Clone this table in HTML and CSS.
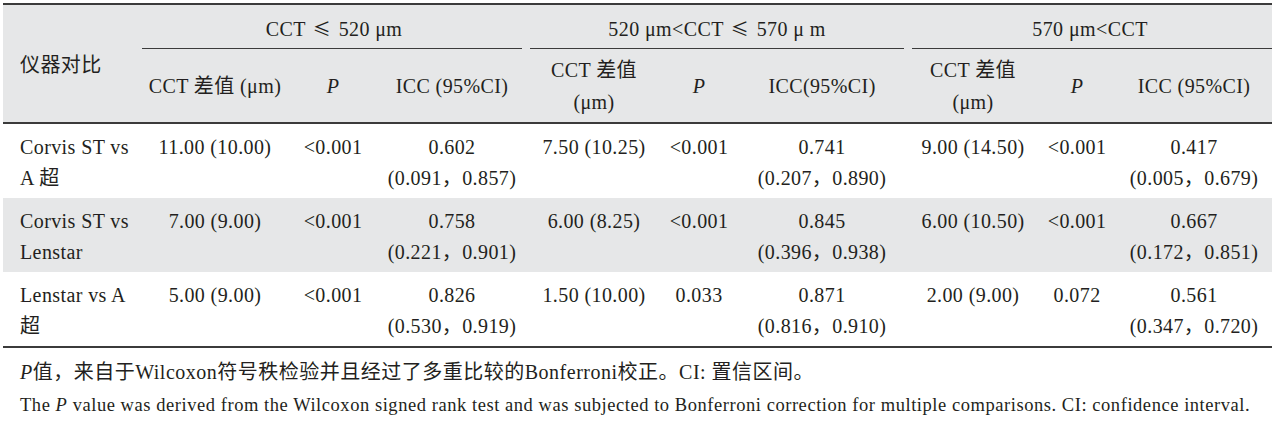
FILE: index.html
```html
<!DOCTYPE html>
<html lang="zh">
<head>
<meta charset="utf-8">
<title>仪器对比</title>
<link rel="stylesheet" href="styles.css">
</head>
<body>
<div class="page">
  <table class="data">
    <colgroup>
      <col class="c-name">
      <col class="c-g1a"><col class="c-g1b"><col class="c-g1c">
      <col class="c-g2a"><col class="c-g2b"><col class="c-g2c">
      <col class="c-g3a"><col class="c-g3b"><col class="c-g3c">
    </colgroup>
    <thead>
      <tr class="h1">
        <th rowspan="2" class="name">仪器对比</th>
        <th colspan="3" class="grp grp-first">CCT <span class="le">≤</span> 520 μm</th>
        <th colspan="3" class="grp grp-mid">520 μm&lt;CCT <span class="le">≤</span> 570 μ m</th>
        <th colspan="3" class="grp grp-last">570 μm&lt;CCT</th>
      </tr>
      <tr class="h2">
        <th>CCT 差值 (μm)</th>
        <th><i>P</i></th>
        <th>ICC (95%CI)</th>
        <th>CCT 差值<br>(μm)</th>
        <th><i>P</i></th>
        <th>ICC(95%CI)</th>
        <th>CCT 差值<br>(μm)</th>
        <th><i>P</i></th>
        <th>ICC (95%CI)</th>
      </tr>
    </thead>
    <tbody>
      <tr>
        <td class="name">Corvis ST vs<br>A 超</td>
        <td>11.00 (10.00)</td>
        <td>&lt;0.001</td>
        <td>0.602<br>(0.091，0.857)</td>
        <td>7.50 (10.25)</td>
        <td>&lt;0.001</td>
        <td>0.741<br>(0.207，0.890)</td>
        <td>9.00 (14.50)</td>
        <td>&lt;0.001</td>
        <td>0.417<br>(0.005，0.679)</td>
      </tr>
      <tr class="shade">
        <td class="name">Corvis ST vs<br>Lenstar</td>
        <td>7.00 (9.00)</td>
        <td>&lt;0.001</td>
        <td>0.758<br>(0.221，0.901)</td>
        <td>6.00 (8.25)</td>
        <td>&lt;0.001</td>
        <td>0.845<br>(0.396，0.938)</td>
        <td>6.00 (10.50)</td>
        <td>&lt;0.001</td>
        <td>0.667<br>(0.172，0.851)</td>
      </tr>
      <tr>
        <td class="name">Lenstar vs A<br>超</td>
        <td>5.00 (9.00)</td>
        <td>&lt;0.001</td>
        <td>0.826<br>(0.530，0.919)</td>
        <td>1.50 (10.00)</td>
        <td>0.033</td>
        <td>0.871<br>(0.816，0.910)</td>
        <td>2.00 (9.00)</td>
        <td>0.072</td>
        <td>0.561<br>(0.347，0.720)</td>
      </tr>
    </tbody>
  </table>
  <div class="notes">
    <p class="note-zh"><i>P</i>值，来自于Wilcoxon符号秩检验并且经过了多重比较的Bonferroni校正。CI: 置信区间。</p>
    <p class="note-en">The <i>P</i> value was derived from the Wilcoxon signed rank test and was subjected to Bonferroni correction for multiple comparisons. CI: confidence interval.</p>
  </div>
</div>
</body>
</html>
```
FILE: styles.css
```css
html, body {
  margin: 0;
  padding: 0;
  background: #ffffff;
}

body {
  font-family: "Liberation Serif", "Noto Sans CJK SC", serif;
  color: #231f20;
}

.page {
  padding: 3px 5px 0 3px;
}

.data {
  width: 1269px;
  border-collapse: collapse;
  table-layout: fixed;
  font-size: 20px;
  letter-spacing: 0.4px;
}

.c-name { width: 139px; }
.c-g1a { width: 146px; }
.c-g1b { width: 90px; }
.c-g1c { width: 148px; }
.c-g2a { width: 136px; }
.c-g2b { width: 74px; }
.c-g2c { width: 172px; }
.c-g3a { width: 130px; }
.c-g3b { width: 78px; }
.c-g3c { width: 156px; }

.data thead {
  background: #e6e7e8;
  border-top: 2px solid #3b3b3b;
  border-bottom: 2px solid #3b3b3b;
}

.data th {
  font-weight: normal;
  text-align: center;
  padding: 0 4px;
}

.le {
  font-family: "Noto Sans CJK SC", "DejaVu Sans", sans-serif;
  font-size: 18px;
  margin: 0 2px;
}

.data th.name {
  text-align: left;
  padding-left: 17px;
  vertical-align: middle;
  padding-bottom: 6px;
}

.h1 th {
  height: 43px;
  line-height: 30px;
  padding-top: 8px;
  padding-bottom: 5px;
  box-sizing: border-box;
  vertical-align: middle;
  background-repeat: no-repeat;
  background-image: linear-gradient(#3b3b3b, #3b3b3b);
  background-position: left bottom;
}

.h1 th.name {
  background-image: none;
}

.h1 th.grp-first {
  background-size: calc(100% - 4px) 1.5px;
  background-position: left bottom;
}

.h1 th.grp-mid {
  background-size: calc(100% - 8px) 1.5px;
  background-position: center bottom;
}

.h1 th.grp-last {
  background-size: calc(100% - 4px) 1.5px;
  background-position: right bottom;
}

.h2 th {
  height: 74px;
  line-height: 32px;
  vertical-align: middle;
  box-sizing: border-box;
}

.data td {
  text-align: center;
  vertical-align: top;
  line-height: 31px;
  padding: 8px 4px 4px;
  height: 74px;
  box-sizing: border-box;
}

.data td.name {
  text-align: left;
  padding-left: 17px;
}

.data tr.shade td {
  background: #e6e7e8;
}

.data tbody {
  border-bottom: 2px solid #3b3b3b;
}

.notes {
  padding: 8px 0 0 17px;
}

.notes p {
  margin: 0;
  line-height: 33px;
  white-space: nowrap;
}

.note-zh {
  font-size: 20px;
  letter-spacing: 0.5px;
}

.note-en {
  font-size: 18.5px;
  letter-spacing: 0.55px;
}
```
